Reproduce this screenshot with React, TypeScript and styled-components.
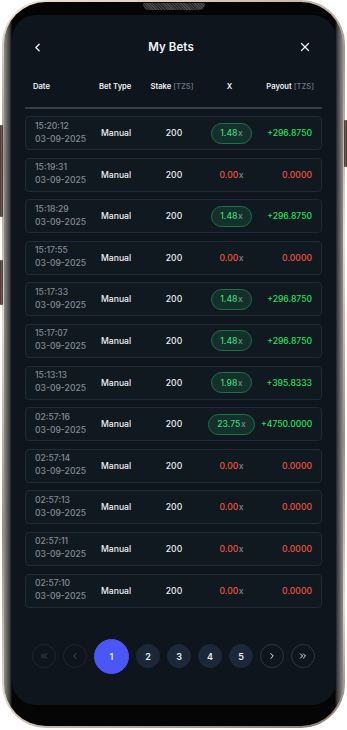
import React from 'react';
import styled, { createGlobalStyle } from 'styled-components';
import { ChevronLeft, ChevronRight, ChevronsLeft, ChevronsRight, X } from 'lucide-react';

const GlobalStyle = createGlobalStyle`
  html, body {
    margin: 0;
    padding: 0;
    background: #ffffff;
  }
  body {
    font-family: Inter, "Noto Sans", Roboto, sans-serif;
    -webkit-font-smoothing: antialiased;
  }
  * {
    box-sizing: border-box;
  }
`;

const Stage = styled.div`
  position: relative;
  width: 347px;
  height: 730px;
`;

const SideButton = styled.div<{ side: 'left' | 'right'; top: number; len: number }>`
  position: absolute;
  top: ${(p) => p.top}px;
  height: ${(p) => p.len}px;
  width: 3px;
  ${(p) => (p.side === 'left' ? 'left: 0;' : 'right: 0;')}
  background: linear-gradient(to right, #3a302c, #6b5d56, #3a302c);
  border-radius: 1px;
`;

const Phone = styled.div`
  position: relative;
  margin: 0 2px;
  height: 728px;
  border-radius: 44px;
  padding: 2px;
  background: linear-gradient(
    165deg,
    #efe6dc 0%,
    #a89588 18%,
    #e6dbcf 40%,
    #9e8c80 65%,
    #e3d8cc 85%,
    #8a786d 100%
  );
`;

const Notch = styled.div`
  position: absolute;
  top: 3px;
  left: 50%;
  transform: translateX(-50%);
  width: 62px;
  height: 7px;
  border-radius: 0 0 6px 6px;
  background: repeating-linear-gradient(45deg, #2a2a2a 0 1px, #4a4a4a 1px 2px);
`;

const Bezel = styled.div`
  height: 100%;
  border-radius: 42px;
  padding: 13px 7px 21px 8px;
  background: linear-gradient(
    to right,
    #8d8d8d 0,
    #3a3a3a 6px,
    #050505 8px,
    #050505 calc(100% - 8px),
    #3a3a3a calc(100% - 6px),
    #8d8d8d 100%
  );
`;

const Screen = styled.div`
  height: 100%;
  border-radius: 24px;
  background: #0e151d;
  padding: 0 14px 0 13px;
  display: flex;
  flex-direction: column;
  overflow: hidden;
`;

const TopBar = styled.div`
  margin-top: 20px;
  height: 24px;
  display: flex;
  align-items: center;
  justify-content: space-between;
  padding: 0 9px 0 4px;
  color: #f1f4f8;
`;

const Title = styled.div`
  font-size: 11.5px;
  font-weight: 600;
  color: #f1f4f8;
  letter-spacing: 0.1px;
`;

const IconButton = styled.div`
  width: 16px;
  height: 16px;
  display: flex;
  align-items: center;
  justify-content: center;
  color: #f1f4f8;
`;

const Columns = styled.div`
  display: grid;
  grid-template-columns: 66px 45px 56px 59px 1fr;
  align-items: center;
  padding: 0 9px;
`;

const HeaderRow = styled(Columns)`
  margin-top: 15px;
  height: 24px;
  padding: 0 8px;
`;

const HeadCell = styled.div<{ align?: 'left' | 'center' | 'right' }>`
  font-size: 7.6px;
  font-weight: 600;
  color: #eef1f5;
  text-align: ${(p) => p.align || 'left'};
  white-space: nowrap;
`;

const Unit = styled.span`
  color: #6c7580;
  font-weight: 500;
  margin-left: 2px;
`;

const Divider = styled.div`
  margin-top: 9px;
  height: 2px;
  background: #353c46;
`;

const List = styled.div`
  margin-top: 7px;
  display: flex;
  flex-direction: column;
  gap: 7.6px;
`;

const Row = styled(Columns)`
  height: 34px;
  border: 1px solid #1f2b39;
  border-radius: 4px;
  background: #101820;
`;

const DateCell = styled.div`
  display: flex;
  flex-direction: column;
  font-size: 8.6px;
  font-weight: 500;
  color: #858c96;
  line-height: 13px;
  margin-top: -1px;
`;

const Cell = styled.div<{ align?: 'left' | 'center' | 'right'; tone?: 'win' | 'lose' | 'plain' }>`
  font-size: 8.6px;
  font-weight: 500;
  text-align: ${(p) => p.align || 'left'};
  color: ${(p) => (p.tone === 'win' ? '#27e05d' : p.tone === 'lose' ? '#f2553f' : '#eef1f6')};
  white-space: nowrap;
`;

const MultiCell = styled.div`
  display: flex;
  justify-content: center;
`;

const Multiplier = styled.div<{ win: boolean }>`
  height: 21px;
  min-width: 39px;
  padding: 0 8px;
  border-radius: 11px;
  display: flex;
  align-items: center;
  justify-content: center;
  font-size: 8.6px;
  font-weight: 500;
  color: ${(p) => (p.win ? '#3bd97c' : '#f2553f')};
  background: ${(p) => (p.win ? '#14302a' : 'transparent')};
  border: 1px solid ${(p) => (p.win ? '#1f7050' : 'transparent')};
`;

const Times = styled.span`
  color: #7e8891;
  margin-left: 0.5px;
`;

const Pager = styled.div`
  margin-top: 31px;
  display: flex;
  align-items: center;
  justify-content: center;
  gap: 7px;
`;

const PageButton = styled.div<{ active?: boolean; kind?: 'num' | 'off' | 'nav' }>`
  width: ${(p) => (p.active ? 35 : 24)}px;
  height: ${(p) => (p.active ? 35 : 24)}px;
  border-radius: 50%;
  display: flex;
  align-items: center;
  justify-content: center;
  font-size: 9px;
  font-weight: 600;
  color: ${(p) => (p.kind === 'off' ? '#505a67' : '#e6ebf2')};
  background: ${(p) => (p.active ? '#4b56f6' : p.kind === 'num' ? '#1c2838' : 'transparent')};
  border: 1px solid
    ${(p) => (p.active ? '#4b56f6' : p.kind === 'num' ? '#1c2838' : p.kind === 'off' ? '#1d2530' : '#2a3546')};
`;

interface Bet {
  time: string;
  mult: string;
  payout: string;
}

const bets: Bet[] = [
  { time: '15:20:12', mult: '1.48', payout: '+296.8750' },
  { time: '15:19:31', mult: '0.00', payout: '0.0000' },
  { time: '15:18:29', mult: '1.48', payout: '+296.8750' },
  { time: '15:17:55', mult: '0.00', payout: '0.0000' },
  { time: '15:17:33', mult: '1.48', payout: '+296.8750' },
  { time: '15:17:07', mult: '1.48', payout: '+296.8750' },
  { time: '15:13:13', mult: '1.98', payout: '+395.8333' },
  { time: '02:57:16', mult: '23.75', payout: '+4750.0000' },
  { time: '02:57:14', mult: '0.00', payout: '0.0000' },
  { time: '02:57:13', mult: '0.00', payout: '0.0000' },
  { time: '02:57:11', mult: '0.00', payout: '0.0000' },
  { time: '02:57:10', mult: '0.00', payout: '0.0000' },
];

const App: React.FC = () => {
  return (
    <Stage>
      <GlobalStyle />
      <Phone>
        <Bezel>
          <Screen>
            <TopBar>
              <IconButton>
                <ChevronLeft size={13} strokeWidth={2.4} />
              </IconButton>
              <Title>My Bets</Title>
              <IconButton>
                <X size={14} strokeWidth={2.2} />
              </IconButton>
            </TopBar>

            <HeaderRow>
              <HeadCell>Date</HeadCell>
              <HeadCell>Bet Type</HeadCell>
              <HeadCell align="center">
                Stake<Unit>[TZS]</Unit>
              </HeadCell>
              <HeadCell align="center">X</HeadCell>
              <HeadCell align="right">
                Payout<Unit>[TZS]</Unit>
              </HeadCell>
            </HeaderRow>
            <Divider />

            <List>
              {bets.map((bet) => {
                const win = bet.mult !== '0.00';
                return (
                  <Row key={bet.time}>
                    <DateCell>
                      <span>{bet.time}</span>
                      <span>03-09-2025</span>
                    </DateCell>
                    <Cell>Manual</Cell>
                    <Cell align="center">200</Cell>
                    <MultiCell>
                      <Multiplier win={win}>
                        {bet.mult}
                        <Times>x</Times>
                      </Multiplier>
                    </MultiCell>
                    <Cell align="right" tone={win ? 'win' : 'lose'}>
                      {bet.payout}
                    </Cell>
                  </Row>
                );
              })}
            </List>

            <Pager>
              <PageButton kind="off">
                <ChevronsLeft size={10} strokeWidth={2} />
              </PageButton>
              <PageButton kind="off">
                <ChevronLeft size={10} strokeWidth={2} />
              </PageButton>
              <PageButton active>1</PageButton>
              <PageButton kind="num">2</PageButton>
              <PageButton kind="num">3</PageButton>
              <PageButton kind="num">4</PageButton>
              <PageButton kind="num">5</PageButton>
              <PageButton kind="nav">
                <ChevronRight size={10} strokeWidth={2.4} />
              </PageButton>
              <PageButton kind="nav">
                <ChevronsRight size={10} strokeWidth={2.4} />
              </PageButton>
            </Pager>
          </Screen>
        </Bezel>
        <Notch />
      </Phone>
      <SideButton side="left" top={125} len={92} />
      <SideButton side="left" top={260} len={45} />
      <SideButton side="right" top={120} len={47} />
    </Stage>
  );
};

export default App;
